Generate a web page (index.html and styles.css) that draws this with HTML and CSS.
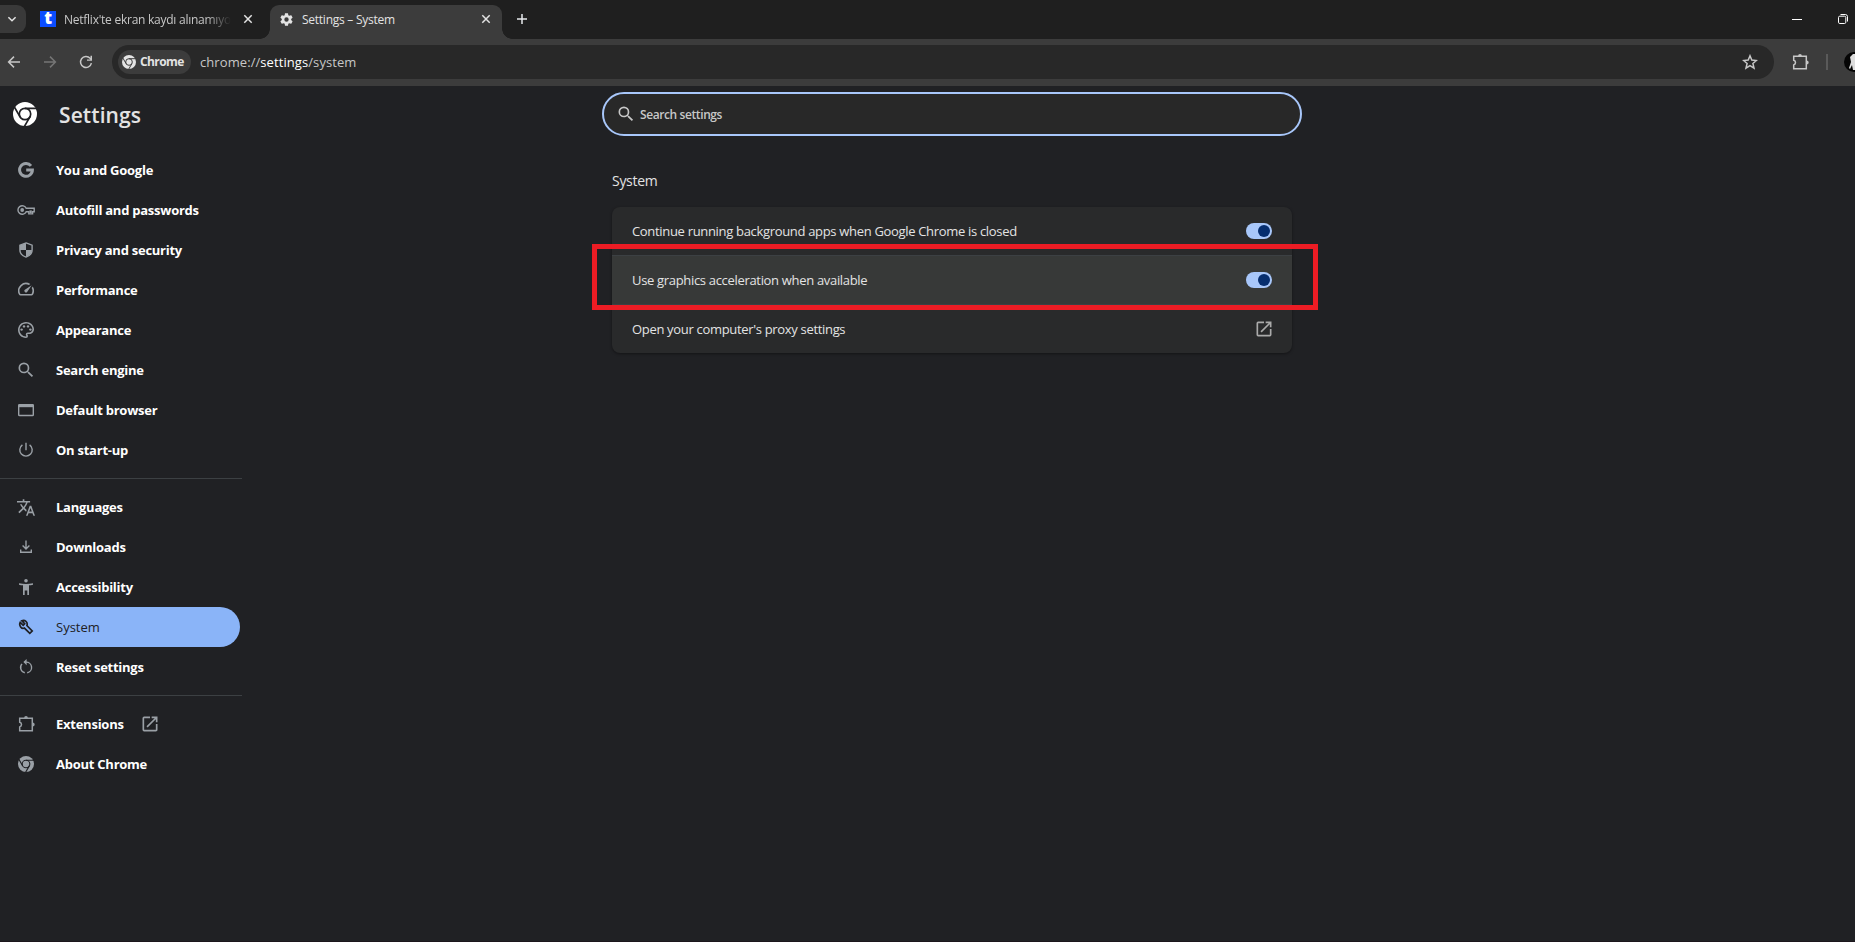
FILE: index.html
```html
<!DOCTYPE html>
<html lang="en-GB">
<head>
    <meta charset="UTF-8">
    <meta name="viewport" content="width=device-width, initial-scale=1.0">
    <title>Settings – System</title>
    <link rel="stylesheet" href="styles.css">
</head>
<body>
    <svg class="sprite" aria-hidden="true">
        <symbol id="chrome" viewBox="0 0 24 24">
            <circle class="disc" cx="12" cy="12" r="12"/>
            <circle class="cut" cx="12" cy="12" r="5.7"/>
            <path class="cut" d="M12 6.3h12M16.94 14.85l-6 10.39M7.06 14.85l-6-10.39"/>
        </symbol>
        <symbol id="search" viewBox="0 0 24 24">
            <path d="M15.5 14h-.79l-.28-.27A6.47 6.47 0 0 0 16 9.5 6.5 6.5 0 1 0 9.5 16c1.61 0 3.09-.59 4.23-1.57l.27.28v.79l5 4.99L20.49 19l-4.99-5zm-6 0a4.5 4.5 0 1 1 0-9 4.5 4.5 0 0 1 0 9z"/>
        </symbol>
        <symbol id="puzzle" viewBox="0 0 20 20">
            <path class="line" d="M3.700 4.200h12.600v12.600H3.700v-3.800a2.500 2.500 0 0 0 0-4.800z"/>
            <path d="M8.100 4.200a1.900 2.200 0 0 1 3.800 0zM16.500 8.600a2.200 1.900 0 0 1 0 3.800z"/>
        </symbol>
        <symbol id="launch" viewBox="0 0 24 24">
            <path d="M19 19H5V5h7V3H5a2 2 0 0 0-2 2v14a2 2 0 0 0 2 2h14c1.1 0 2-.9 2-2v-7h-2v7zM14 3v2h3.59l-9.83 9.83 1.41 1.41L19 6.41V10h2V3h-7z"/>
        </symbol>
        <symbol id="close" viewBox="0 0 10 10">
            <path class="line" d="M1.3 1.3l7.4 7.4M8.7 1.3L1.3 8.7"/>
        </symbol>
    </svg>

    <header class="browser">
        <div class="tabstrip">
            <button class="tab-search"><svg viewBox="0 0 10 10"><path class="line" d="M1.4 3.2L5 6.8l3.6-3.6"/></svg></button>
            <div class="tab">
                <span class="favicon">t</span>
                <span class="tab-title faded">Netflix'te ekran kaydı alınamıyor</span>
                <svg class="close"><use href="#close"/></svg>
            </div>
            <div class="tab active">
                <svg class="gear" viewBox="0 0 24 24"><path d="M19.43 12.98c.04-.32.07-.64.07-.98s-.03-.66-.07-.98l2.11-1.65c.19-.15.24-.42.12-.64l-2-3.46c-.12-.22-.39-.3-.61-.22l-2.49 1c-.52-.4-1.08-.73-1.69-.98l-.38-2.65A.49.49 0 0 0 14 2h-4c-.25 0-.46.18-.49.42l-.38 2.65c-.61.25-1.17.59-1.69.98l-2.49-1c-.23-.09-.49 0-.61.22l-2 3.46c-.13.22-.07.49.12.64l2.11 1.65c-.04.32-.07.65-.07.98s.03.66.07.98l-2.11 1.65c-.19.15-.24.42-.12.64l2 3.46c.12.22.39.3.61.22l2.49-1c.52.4 1.08.73 1.69.98l.38 2.65c.03.24.24.42.49.42h4c.25 0 .46-.18.49-.42l.38-2.65c.61-.25 1.17-.59 1.69-.98l2.49 1c.23.09.49 0 .61-.22l2-3.46c.12-.22.07-.49-.12-.64l-2.11-1.65zM12 15.5a3.5 3.5 0 1 1 0-7 3.5 3.5 0 0 1 0 7z"/></svg>
                <span class="tab-title">Settings – System</span>
                <svg class="close"><use href="#close"/></svg>
            </div>
            <svg class="new-tab" viewBox="0 0 12 12"><path class="line" d="M6 1v10M1 6h10"/></svg>
            <div class="window-buttons">
                <svg viewBox="0 0 10 10"><path class="line" d="M0 5.5h10"/></svg>
                <svg viewBox="0 0 10 10"><rect class="line" x=".5" y="2.2" width="7.3" height="7.3" rx="1.3"/><path class="line" d="M2.5.5h4.8a2.2 2.2 0 0 1 2.2 2.2v4.8"/></svg>
            </div>
        </div>
        <div class="toolbar">
            <svg class="nav-icon" viewBox="0 0 14 14"><path class="line" d="M13 7H1.8M7 1.6L1.6 7 7 12.4"/></svg>
            <svg class="nav-icon disabled" viewBox="0 0 14 14"><path class="line" d="M1 7h11.2M7 1.6L12.4 7 7 12.4"/></svg>
            <svg class="nav-icon" viewBox="0 0 14 14"><path class="line" d="M12.4 8.2a5.5 5.5 0 1 1-1.3-4.9l1.1 1.3"/><path d="M13 .8v5H8V4.400h3.500V.8z"/></svg>
            <div class="omnibox">
                <span class="chip"><svg><use href="#chrome"/></svg>Chrome</span>
                <span class="url">chrome://<b>settings</b>/system</span>
                <svg class="star" viewBox="0 0 16 16"><path class="line" d="M8 1.800l1.800 4.300 4.600.4-3.500 3 1.100 4.600L8 11.600l-4 2.500 1.100-4.600-3.500-3 4.600-.4z"/></svg>
            </div>
            <svg class="ext"><use href="#puzzle"/></svg>
            <span class="separator"></span>
            <svg class="avatar" viewBox="0 0 20 20"><circle cx="10" cy="10" r="10" fill="#050505"/><path fill="#ddd" d="M6 5l3-3h4v16H9l-1-5-2 4-1-1 2-6z"/></svg>
        </div>
    </header>

    <div class="page">
        <aside class="sidebar">
            <div class="brand">
                <svg><use href="#chrome"/></svg>
                <h1>Settings</h1>
            </div>
            <nav>
                <a class="item"><svg viewBox="0 0 16 16"><path class="g" d="M13 3.900A6.400 6.400 0 1 0 14.400 8H8.200"/></svg><span>You and Google</span></a>
                <a class="item"><svg class="wide" viewBox="0 0 18 12"><path class="line" d="M9.200 4.300A4.300 4.300 0 1 0 9.200 7.700h2.600v2.200h3.800V7.700h1.600V4.300z"/><circle cx="5.200" cy="6" r="1.900"/><path d="M12.400 6.400h2.400v2.800h-2.400z"/></svg><span>Autofill and passwords</span></a>
                <a class="item"><svg viewBox="0 0 16 16"><path class="line" d="M8 .9l6.100 2.300v4.500c0 3.400-2.500 6.200-6.100 7.400-3.600-1.200-6.100-4-6.100-7.400V3.200z"/><path d="M8 8h6c-.3 3.400-2.500 5.900-6 7zM8 1v7H2V3.300z"/></svg><span>Privacy and security</span></a>
                <a class="item"><svg viewBox="2 3 20 20"><path d="M20.380 8.570l-1.230 1.850a8 8 0 0 1-.220 7.580H5.070A8 8 0 0 1 15.580 6.850l1.850-1.230A10 10 0 0 0 3.350 19a2 2 0 0 0 1.720 1h13.850a2 2 0 0 0 1.740-1 10 10 0 0 0-.27-10.440zm-9.790 6.840a2 2 0 0 0 2.830 0l5.660-8.490-8.490 5.660a2 2 0 0 0 0 2.830z"/></svg><span>Performance</span></a>
                <a class="item"><svg viewBox="2 2 20 20"><path d="M12 22C6.490 22 2 17.510 2 12S6.490 2 12 2s10 4.040 10 9c0 3.310-2.690 6-6 6h-1.770c-.28 0-.5.22-.5.5 0 .12.05.23.13.33.41.47.64 1.060.64 1.670A2.500 2.500 0 0 1 12 22zm0-18c-4.410 0-8 3.590-8 8s3.590 8 8 8c.28 0 .5-.22.5-.5a.54.54 0 0 0-.14-.35c-.41-.46-.63-1.050-.63-1.650a2.500 2.500 0 0 1 2.500-2.500H16c2.210 0 4-1.790 4-4 0-3.860-3.590-7-8-7z"/><circle cx="6.500" cy="11.500" r="1.500"/><circle cx="9.500" cy="7.500" r="1.500"/><circle cx="14.500" cy="7.500" r="1.500"/><circle cx="17.500" cy="11.500" r="1.500"/></svg><span>Appearance</span></a>
                <a class="item"><svg class="large"><use href="#search"/></svg><span>Search engine</span></a>
                <a class="item"><svg viewBox="0 0 16 16"><rect class="line" x=".7" y="2.700" width="14.600" height="10.800" rx=".8"/><path d="M.5 2.200h15v3H.5z"/></svg><span>Default browser</span></a>
                <a class="item"><svg viewBox="0 0 16 16"><path class="line" d="M8 .8v7.400M4.400 2.900a6.200 6.200 0 1 0 7.200 0"/></svg><span>On start-up</span></a>
                <hr>
                <a class="item"><svg class="wide tall" viewBox="1 2 22 20"><path d="M12.870 15.070l-2.540-2.510.03-.03A17.520 17.520 0 0 0 14.070 6H17V4h-7V2H8v2H1v1.990h11.170C11.500 7.920 10.440 9.750 9 11.350 8.070 10.320 7.300 9.190 6.690 8h-2c.73 1.630 1.730 3.170 2.980 4.560l-5.090 5.020L4 19l5-5 3.110 3.110.76-2.040zM18.500 10h-2L12 22h2l1.120-3h4.750L21 22h2l-4.500-12zm-2.620 7l1.620-4.330L19.120 17h-3.240z"/></svg><span>Languages</span></a>
                <a class="item"><svg viewBox="0 0 16 16"><path class="line" d="M8 1.500v8.200M4.600 6.500L8 9.900l3.400-3.400M2.700 10.500v2.800h10.600v-2.800"/></svg><span>Downloads</span></a>
                <a class="item"><svg viewBox="0 0 16 16"><circle cx="8" cy="1.800" r="1.800"/><path d="M1 4.200c4.600 1 9.400 1 14 0v1.500c-1.300.3-2.700.5-4 .6V16H9.300v-4.500H6.700V16H5V6.300c-1.300-.1-2.700-.3-4-.6z"/></svg><span>Accessibility</span></a>
                <a class="item selected"><svg viewBox="0 0 16 16"><path class="line" d="M2.200 3.300l3 2.900 1.500-1.500-2.900-3c2.900-1.300 6.400 1.200 5.100 4.900l5.300 5.400-2.400 2.400-5.400-5.300C3.600 10.400.6 6.500 2.200 3.300z"/></svg><span>System</span></a>
                <a class="item"><svg viewBox="0 0 16 16"><path class="line" d="M6.800 13.800A5.400 5.400 0 0 1 4 4.900M9.200 13.800A5.400 5.400 0 0 0 8 3.100H6.300"/><path d="M8.600 0v6.200L5.400 3.100z"/></svg><span>Reset settings</span></a>
                <hr>
                <a class="item"><svg class="large"><use href="#puzzle"/></svg><span>Extensions</span><svg class="large out"><use href="#launch"/></svg></a>
                <a class="item"><svg><use href="#chrome"/></svg><span>About Chrome</span></a>
            </nav>
        </aside>

        <main>
            <div class="search">
                <svg><use href="#search"/></svg>
                <span>Search settings</span>
            </div>
            <h2>System</h2>
            <section class="card">
                <div class="row"><span>Continue running background apps when Google Chrome is closed</span><i class="toggle"></i></div>
                <div class="row hover"><span>Use graphics acceleration when available</span><i class="toggle"></i></div>
                <div class="row"><span>Open your computer's proxy settings</span><svg><use href="#launch"/></svg></div>
                <div class="highlight"></div>
            </section>
        </main>
    </div>
</body>
</html>
```
FILE: styles.css
```css
* {
    box-sizing: border-box;
}
body {
    margin: 0;
    height: 100vh;
    overflow: hidden;
    border-bottom: 1px solid #1c161c;
    background: #202124;
    color: #e8eaed;
    font-family: "Open Sans", "Noto Sans", sans-serif;
    font-size: 13px;
    white-space: nowrap;
}
svg {
    display: block;
    flex: none;
    fill: currentColor;
}
.sprite {
    position: absolute;
    width: 0;
    height: 0;
}
.line {
    fill: none;
    stroke: currentColor;
    stroke-width: 1.5;
}
.disc {
    fill: currentColor;
}
.cut {
    fill: none;
    stroke: var(--cut, #202124);
    stroke-width: 1.7;
}

/* browser frame */
.tabstrip {
    display: flex;
    height: 39px;
    padding-top: 5px;
    background: #1f1f1f;
}
.tab-search {
    display: flex;
    align-items: center;
    justify-content: center;
    width: 26px;
    height: 28px;
    padding: 0 2px 0 0;
    border: 0;
    border-radius: 0 9px 9px 0;
    background: #393939;
    color: #e3e3e3;
}
.tab-search svg {
    width: 10px;
    height: 10px;
}
.tab {
    display: flex;
    align-items: center;
    width: 232px;
    height: 34px;
    padding: 0 11px 6px 9px;
    color: #c7c7c7;
    font-size: 12px;
    letter-spacing: -0.25px;
}
.tab:not(.active) {
    width: 244px;
    padding: 0 17px 6px 14px;
}
.tab.active {
    position: relative;
    border-radius: 9px 9px 0 0;
    background: #3c3c3c;
    color: #e3e3e3;
}
/* flared feet of the active tab */
.tab.active::before,
.tab.active::after {
    content: "";
    position: absolute;
    bottom: 0;
    width: 10px;
    height: 10px;
}
.tab.active::before {
    left: -10px;
    background: radial-gradient(circle at 0 0, transparent 9.5px, #3c3c3c 10px);
}
.tab.active::after {
    right: -10px;
    background: radial-gradient(circle at 100% 0, transparent 9.5px, #3c3c3c 10px);
}
.favicon {
    width: 16px;
    height: 16px;
    background: #0b4dff;
    color: #fff;
    font-size: 17px;
    font-weight: 800;
    line-height: 13px;
    text-align: center;
}
.tab-title {
    flex: 1;
    overflow: hidden;
    margin-left: 8px;
}
.tab-title.faded {
    margin-right: 12px;
    -webkit-mask-image: linear-gradient(90deg, #000 85%, transparent);
    mask-image: linear-gradient(90deg, #000 85%, transparent);
}
.gear {
    width: 15px;
    height: 15px;
}
.close {
    width: 10px;
    height: 10px;
    color: #e3e3e3;
}
.new-tab {
    width: 12px;
    height: 12px;
    margin: 8px 0 0 14px;
}
.window-buttons {
    display: flex;
    gap: 36px;
    margin: 9px 7px 0 auto;
    color: #fff;
}
.window-buttons svg {
    width: 10px;
    height: 10px;
}
.window-buttons .line {
    stroke-width: 1;
}
.toolbar {
    display: flex;
    align-items: center;
    height: 47px;
    padding: 0 0 2px 7px;
    background: #3c3c3c;
    color: #c7c7c7;
}
.nav-icon {
    width: 14px;
    height: 14px;
    margin-right: 22px;
}
.disabled {
    color: #757575;
}
.omnibox {
    display: flex;
    align-items: center;
    flex: 1;
    height: 34px;
    margin-left: -3px;
    padding: 0 16px 0 6px;
    border-radius: 17px;
    background: #282828;
}
.chip {
    --cut: #3c3c3c;
    display: flex;
    align-items: center;
    gap: 4px;
    width: 73px;
    height: 24px;
    padding-left: 4px;
    border-radius: 12px;
    background: #3c3c3c;
    color: #e3e3e3;
    font-size: 12px;
    font-weight: 700;
    letter-spacing: -0.6px;
}
.chip svg {
    width: 14px;
    height: 14px;
}
.url {
    margin-left: 9px;
    letter-spacing: 0.08px;
}
.url b {
    color: #fff;
    font-weight: 400;
}
.star {
    width: 16px;
    height: 16px;
    margin-left: auto;
}
.ext {
    width: 20px;
    height: 20px;
    margin-left: 16px;
}
.separator {
    width: 2px;
    height: 16px;
    margin: 0 16px 0 16px;
    background: #5a5a5a;
}
.avatar {
    width: 20px;
    height: 20px;
    margin-right: -9px;
}

/* settings page */
.page {
    display: grid;
    grid-template-columns: 602px 700px;
}
.brand {
    display: flex;
    align-items: center;
    height: 56px;
    margin-bottom: 8px;
    padding-left: 13px;
    color: #fff;
}
.brand svg {
    width: 24px;
    height: 24px;
}
h1 {
    margin: 2px 0 0 22px;
    color: #e3e3e3;
    font-size: 21px;
    font-weight: 600;
    letter-spacing: 0.1px;
}
.sidebar {
    width: 242px;
}
.item {
    display: flex;
    align-items: center;
    width: 240px;
    height: 40px;
    color: #9aa0a6;
}
.item > svg:first-child {
    width: 16px;
    height: 16px;
    margin: 0 22px 0 18px;
}
.item > svg.wide:first-child {
    width: 18px;
    height: 12px;
    margin: 0 21px 0 17px;
}
.item > svg.tall:first-child {
    height: 17px;
}
.item > svg.large:first-child {
    width: 20px;
    height: 20px;
    margin: 0 20px 0 16px;
}
.item span {
    color: #fff;
    font-weight: 700;
    letter-spacing: -0.25px;
}
.item .line {
    stroke-width: 1.4;
}
.item .g {
    fill: none;
    stroke: currentColor;
    stroke-width: 3;
}
.out {
    width: 20px;
    height: 20px;
    margin-left: 16px;
}
.item.selected {
    border-radius: 0 20px 20px 0;
    background: #8ab4f8;
    color: #202124;
}
.item.selected span {
    color: #202124;
    font-weight: 500;
    letter-spacing: 0;
}
.item.selected .line {
    stroke-width: 1.7;
}
hr {
    height: 1px;
    margin: 8px 0;
    border: 0;
    background: #3c4043;
}
.search {
    display: flex;
    align-items: center;
    height: 44px;
    margin-top: 6px;
    padding-left: 12px;
    border: 2px solid #a8c7fa;
    border-radius: 22px;
    background: #282828;
    color: #c7c7c7;
    font-size: 12px;
    font-weight: 600;
    letter-spacing: -0.4px;
}
.search svg {
    width: 20px;
    height: 20px;
    margin-right: 4px;
}
h2 {
    margin: 34px 10px 0;
    color: #e3e3e3;
    font-size: 14px;
    font-weight: 400;
    line-height: 22px;
    letter-spacing: -0.3px;
}
.card {
    position: relative;
    margin: 15px 10px 0;
    border-radius: 8px;
    background: #292a2b;
    box-shadow: 0 1px 3px rgba(0, 0, 0, 0.4);
}
.row {
    display: flex;
    align-items: center;
    justify-content: space-between;
    height: 48px;
    padding: 0 20px;
    color: #e3e3e3;
    letter-spacing: -0.32px;
}
.row + .row {
    height: 49px;
    border-top: 1px solid #3c4043;
}
.row.hover {
    background: #373938;
}
.row svg {
    width: 20px;
    height: 20px;
    margin-right: -2px;
    color: #aaa;
}
.toggle {
    width: 26px;
    height: 16px;
    padding: 2px 2px 2px 12px;
    border-radius: 8px;
    background: #a8c7fa;
}
.toggle::before {
    content: "";
    display: block;
    width: 12px;
    height: 12px;
    border-radius: 50%;
    background: #062e6f;
}
.highlight {
    position: absolute;
    top: 37px;
    left: -20px;
    width: 726px;
    height: 66px;
    border: 5px solid #ec1c24;
}
```
